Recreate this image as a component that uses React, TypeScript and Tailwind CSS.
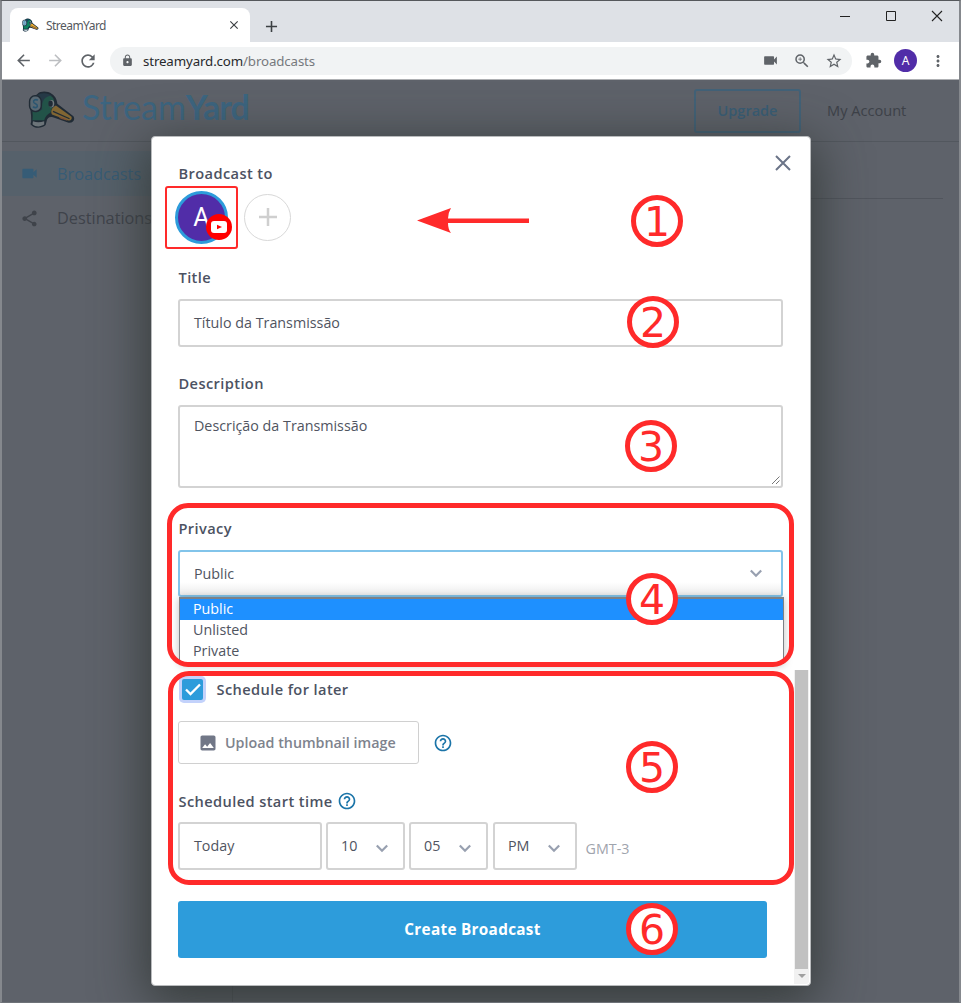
import React from "react";
import {
  MdVideocam,
  MdShare,
  MdArrowBack,
  MdArrowForward,
  MdRefresh,
  MdLock,
  MdZoomIn,
  MdStarBorder,
  MdExtension,
  MdMoreVert,
  MdClose,
  MdAdd,
  MdImage,
  MdHelpOutline,
} from "react-icons/md";

function Duck({ className }: { className: string }) {
  return (
    <svg viewBox="0 0 48 40" className={className}>
      <path
        d="M2.500 26 C1 17 3 8 9 4 C12 1 19 .5 24 4 C28 7 29 10 29.500 14 L46 27 C48 30 46 34 41 33.500 L25 28 C21 27 19 29 18.500 32 L17.500 36 C13 40 5 39.500 2 35 C3 32 2.500 29 2.500 26Z"
        fill="#0b2236"
      />
      <path d="M8 8 C12 3 21 3 25 8 C28 13 24 17 22.500 23 C19 25 17 27 16 31 L4 31 C5 25 3 20 4 14Z" fill="#0f8260" />
      <path d="M4 12 C7 3 17 1 24 6 C17 6 13 11 14 20 L8 23Z" fill="#17455c" />
      <path d="M28 16 L44 27.500 C45 30 43 32 40 31 L24 25 C22 22 24 18 28 16Z" fill="#f0ae31" />
      <path d="M25 22 L42 29.500" stroke="#0b2236" strokeWidth="1.300" />
      <path d="M30 27 L38 29.500 L40 31.500 L33 29.500Z" fill="#e77730" />
      <path d="M4.500 32 C8 33.500 12 33.500 16 32 L16 35.500 C12 38 7 38 4 35Z" fill="#c0ced5" />
      <rect x="1" y="6" width="12" height="16" rx="5.500" fill="#92b4c7" stroke="#0b2236" strokeWidth="1.500" />
      <path d="M9.500 10.500 C7 9 4.500 10.500 5.200 12.500 C6 14.500 9.500 14 9 16.700 C8.500 18.500 6 18.500 4.500 17" fill="none" stroke="#2589c2" strokeWidth="1.600" />
      <ellipse cx="23.500" cy="14" rx="2.800" ry="3.700" fill="#cfdde0" />
      <ellipse cx="22.500" cy="14" rx="2.300" ry="3.200" fill="#0b2236" />
    </svg>
  );
}

function Chevron() {
  return (
    <svg viewBox="0 0 14 9" className="h-[9px] w-[14px] shrink-0">
      <path d="M1.800 1.500 L7 6.700 L12.200 1.500" fill="none" stroke="#98a0b0" strokeWidth="2.200" />
    </svg>
  );
}

function TitleBar() {
  return (
    <div className="flex h-[41px] items-end justify-between bg-[#dee1e6]">
      <div className="flex items-end">
        <div className="ml-2 flex h-[34px] w-[240px] items-center rounded-t-lg bg-white pl-3 pr-[9px]">
          <Duck className="h-[14px] w-[17px]" />
          <span className="ml-[7px] mt-px flex-1 text-[12px] tracking-[-0.55px] text-[#55595e]">StreamYard</span>
          <MdClose className="size-[14px] text-[#3c4043]" />
        </div>
        <MdAdd className="mb-[6px] ml-[12px] size-[19px] text-[#3c4043]" />
      </div>
      <div className="mb-[20px] mr-[16px] flex items-center gap-[34px]">
        <svg viewBox="0 0 12 12" className="size-3"><path d="M1 6.500H11" stroke="#222" /></svg>
        <svg viewBox="0 0 12 12" className="size-3"><path d="M1.500 1.500H10.500V10.500H1.500Z" fill="none" stroke="#222" /></svg>
        <svg viewBox="0 0 12 12" className="size-3"><path d="M1 1L11 11M11 1L1 11" stroke="#222" strokeWidth="1.100" /></svg>
      </div>
    </div>
  );
}

function Toolbar() {
  return (
    <div className="flex h-[38px] items-center border-b border-[#aeb0b3] bg-white text-[#5f6368]">
      <MdArrowBack className="ml-[12px] size-[19px]" />
      <MdArrowForward className="ml-[13px] size-[19px] text-[#bcbec1]" />
      <MdRefresh className="ml-[13px] size-[20px]" />
      <div className="ml-[12px] flex h-7 w-[742px] items-center rounded-full bg-[#f1f3f4] pl-[11px] pr-[9px]">
        <MdLock className="size-[13px]" />
        <span className="ml-[9px] mt-[2px] flex-1 text-[13.3px] tracking-[-0.13px] text-[#27292c]">
          streamyard.com<span className="text-[#76797d]">/broadcasts</span>
        </span>
        <MdVideocam className="size-[17px]" />
        <MdZoomIn className="ml-[14px] size-[18px]" />
        <MdStarBorder className="ml-[14px] size-[18px]" />
      </div>
      <MdExtension className="ml-[13px] size-[17px]" />
      <div className="ml-[12px] flex size-[23px] items-center justify-center rounded-full bg-[#512da8] text-[12px] text-white">A</div>
      <MdMoreVert className="ml-[12px] size-[18px]" />
    </div>
  );
}

function Backdrop() {
  return (
    <div className="flex flex-1 flex-col bg-[#5e626a] font-['Open_Sans','Noto_Sans',sans-serif]">
      <header className="flex h-[62px] items-center border-b border-[#52575e] pl-[26px]">
        <Duck className="mt-[-3px] h-[39px] w-[48px] opacity-70 brightness-[0.6]" />
        <div className="-mt-[7px] ml-[6px] w-[440px] font-[Lato,sans-serif] text-[34px] leading-none text-[#3c6580]">
          <span className="font-normal tracking-[-0.1px]">Stream</span>
          <span className="font-bold tracking-[-1px]">Yard</span>
        </div>
        <div className="ml-[172px] flex h-[44px] w-[107px] items-center justify-center rounded-[3px] border-2 border-[#426278] text-[14.500px] font-semibold text-[#385d76]">
          Upgrade
        </div>
        <div className="ml-[26px] text-[14.6px] font-medium text-[#3d4148]">My Account</div>
      </header>
      <div className="flex flex-1">
        <nav className="w-[231px] border-r border-[#53575e] pt-[9px] text-[16.3px] font-medium">
          <div className="flex h-[45px] items-center bg-[#56616b] pl-[18px] text-[#365c76]">
            <MdVideocam className="size-[19px]" />
            <span className="ml-[18px] mt-px">Broadcasts</span>
          </div>
          <div className="flex h-[44px] items-center pl-[18px] text-[#3f434a]">
            <MdShare className="size-[19px]" />
            <span className="ml-[18px]">Destinations</span>
          </div>
        </nav>
        <main className="flex-1 px-4">
          <div className="h-[57px] border-b border-[#51555d]" />
        </main>
      </div>
    </div>
  );
}

function Label({ children, className }: { children: React.ReactNode; className: string }) {
  return <div className={`flex items-center pl-[0.5px] text-[14.6px] font-semibold leading-[20px] tracking-[0.4px] text-[#4c5262] ${className}`}>{children}</div>;
}

function TimeSelect({ value, className }: { value: string; className: string }) {
  return (
    <div className={`flex h-12 items-center justify-between rounded-[3px] border-2 border-[#d3d3d3] pl-[13px] pr-[14px] ${className}`}>
      <span>{value}</span>
      <span className="mt-1 flex"><Chevron /></span>
    </div>
  );
}

function Dialog() {
  return (
    <div className="absolute left-[151px] top-[136px] flex h-[850px] w-[660px] flex-col rounded-[4px] border border-[#b9bbbd] bg-white pl-[26px] pr-[27px] font-['Open_Sans','Noto_Sans',sans-serif] text-[14.3px] text-[#50545f] shadow-[0_12px_50px_6px_rgba(48,54,52,0.85)]">
      <div className="flex h-[50px] items-start justify-between pt-[15px]">
        <Label className="mt-[11px]">Broadcast to</Label>
        <svg viewBox="0 0 16 16" className="-mr-[8px] mt-[3px] size-4">
          <path d="M1 1L15 15M15 1L1 15" stroke="#6b7488" strokeWidth="2" />
        </svg>
      </div>
      <div className="-ml-[3px] -mt-px flex h-[62px] items-center">
        <div className="relative mt-px flex size-[53px] items-center justify-center rounded-full border-[3px] border-[#2d9cdb] bg-[#512da8] font-[Roboto,sans-serif] text-[25px] text-white">
          A
          <span className="absolute -right-[7px] bottom-px flex size-[26px] items-center justify-center rounded-full bg-[#f00]">
            <svg viewBox="0 0 16 12" className="h-3 w-4">
              <rect width="16" height="12" rx="3" fill="#fff" />
              <path d="M6 3.700L11 6L6 8.300Z" fill="#f00" />
            </svg>
          </span>
        </div>
        <div className="ml-4 flex size-[47px] items-center justify-center rounded-full border border-[#d8d8d8]">
          <svg viewBox="0 0 18 18" className="size-[18px]"><path d="M9 0V18M0 9H18" stroke="#cfcfcf" strokeWidth="2.500" /></svg>
        </div>
      </div>
      <Label className="mt-[19px]">Title</Label>
      <div className="mt-[11.500px] flex h-12 items-center rounded-[3px] border-2 border-[#d3d3d3] pl-[14px]">Título da Transmissão</div>
      <Label className="mt-[26.500px]">Description</Label>
      <div className="mt-[11.500px] flex h-[83px] justify-between rounded-[3px] border-2 border-[#d3d3d3] pl-[14px] pt-[8px]">
        <span>Descrição da Transmissão</span>
        <svg viewBox="0 0 10 10" className="mb-[1px] size-[10px] self-end">
          <path d="M1 9L8.500 1.500M5 9L8.500 5.500" stroke="#777" />
        </svg>
      </div>
      <Label className="mt-[30.500px]">Privacy</Label>
      <div className="mt-[12px] flex h-[47px] items-center justify-between rounded-[3px] border-2 border-[#82c4ea] bg-linear-to-b from-white from-70% to-[#ececec] pl-[14px] pr-[18px]">
        Public
        <Chevron />
      </div>
      <div className="-mr-px ml-px h-[67px] border border-t-2 border-[#7d8186] shadow-[0_1px_8px_rgba(0,0,0,0.25)]">
        <div className="h-[21px] bg-[#1e90ff] pl-[13px] leading-[20px] text-white">Public</div>
        <div className="h-[21px] pl-[13px] leading-[20px]">Unlisted</div>
        <div className="h-[21px] pl-[13px] leading-[20px]">Private</div>
      </div>
      <div className="ml-[4px] mt-[15px] flex items-center">
        <span className="flex size-[21px] items-center justify-center rounded-[2px] bg-[#2d9cdb] ring-[3px] ring-[#c3d2fb]">
          <svg viewBox="0 0 16 13" className="h-[13px] w-4"><path d="M1 6.500L5.500 11L15 1.500" fill="none" stroke="#fff" strokeWidth="2.300" /></svg>
        </span>
        <Label className="-mt-px ml-[13px]">Schedule for later</Label>
      </div>
      <div className="mt-[21px] flex items-center">
        <div className="flex h-[43px] w-[241px] items-center rounded-[3px] border-[1.5px] border-[#d0d0d0] pl-[19px] text-[14.3px] font-semibold text-[#7e838d]">
          <MdImage className="size-5 text-[#717787]" />
          <span className="ml-[7px]">Upload thumbnail image</span>
        </div>
        <MdHelpOutline className="ml-[14px] size-5 text-[#1b74a8]" />
      </div>
      <Label className="mt-[27px]">
        Scheduled start time
        <MdHelpOutline className="ml-1 size-5 text-[#1b74a8]" />
      </Label>
      <div className="mt-[11px] flex">
        <div className="flex h-12 w-[144px] items-center rounded-[3px] border-2 border-[#d3d3d3] pl-[14px]">Today</div>
        <TimeSelect value="10" className="ml-1 w-[79px]" />
        <TimeSelect value="05" className="ml-1 w-[79px]" />
        <TimeSelect value="PM" className="ml-[5px] w-[84px]" />
        <span className="ml-[8.500px] mt-[16px] text-[#9fa4ad]">GMT-3</span>
      </div>
      <div className="mt-[31px] flex h-[57px] w-[589px] items-center justify-center rounded-[3px] bg-[#2d9cdb] text-[15.3px] font-bold tracking-[0.3px] text-white">
        Create Broadcast
      </div>
      <div className="absolute bottom-px right-px flex h-[314px] w-[15px] flex-col items-center rounded-br-[3px] bg-[#f1f1f1]">
        <div className="h-[299px] w-[13px] bg-[#c1c1c1]" />
        <svg viewBox="0 0 8 4" className="mt-[5px] h-1 w-2"><path d="M0 0H8L4 4Z" fill="#a0a0a0" /></svg>
      </div>
    </div>
  );
}

function Marker({ n, className }: { n: number; className: string }) {
  return (
    <div className={`absolute flex size-[52px] items-center justify-center rounded-full border-[5px] border-[#ff2a2a] bg-white pt-[2px] font-['DejaVu_Sans',sans-serif] text-[41px] leading-none text-[#ff2a2a] ${className}`}>
      {n}
    </div>
  );
}

function Annotations() {
  return (
    <>
      <div className="absolute left-[165px] top-[186px] h-[63px] w-[73px] rounded-[3px] border-2 border-[#ff2a2a]" />
      <svg viewBox="0 0 113 26" className="absolute left-[417px] top-[208px] h-[26px] w-[113px]">
        <path d="M112 10.500V15H31Q31 21 34 25L0 12.500L34 0Q31 5 31 10.500Z" fill="#ff2a2a" />
      </svg>
      <div className="absolute left-[167px] top-[503px] h-[164px] w-[627px] rounded-[21px] border-[5px] border-[#ff2a2a]" />
      <div className="absolute left-[168px] top-[671px] h-[214px] w-[626px] rounded-[21px] border-[5px] border-[#ff2a2a]" />
      <Marker n={1} className="left-[631px] top-[195px]" />
      <Marker n={2} className="left-[627px] top-[296px]" />
      <Marker n={3} className="left-[625px] top-[420px]" />
      <Marker n={4} className="left-[626px] top-[573px]" />
      <Marker n={5} className="left-[626px] top-[741px]" />
      <Marker n={6} className="left-[626px] top-[903px]" />
    </>
  );
}

export default function App() {
  return (
    <div className="relative flex h-[1003px] w-[961px] flex-col overflow-hidden border-b border-l-2 border-r-2 border-t border-b-[#6e7278] border-l-[#85888d] border-r-[#85888d] border-t-[#55585c] font-['Noto_Sans',sans-serif]">
      <TitleBar />
      <Toolbar />
      <Backdrop />
      <div className="absolute -left-[2px] -top-px">
        <Dialog />
        <Annotations />
      </div>
    </div>
  );
}
